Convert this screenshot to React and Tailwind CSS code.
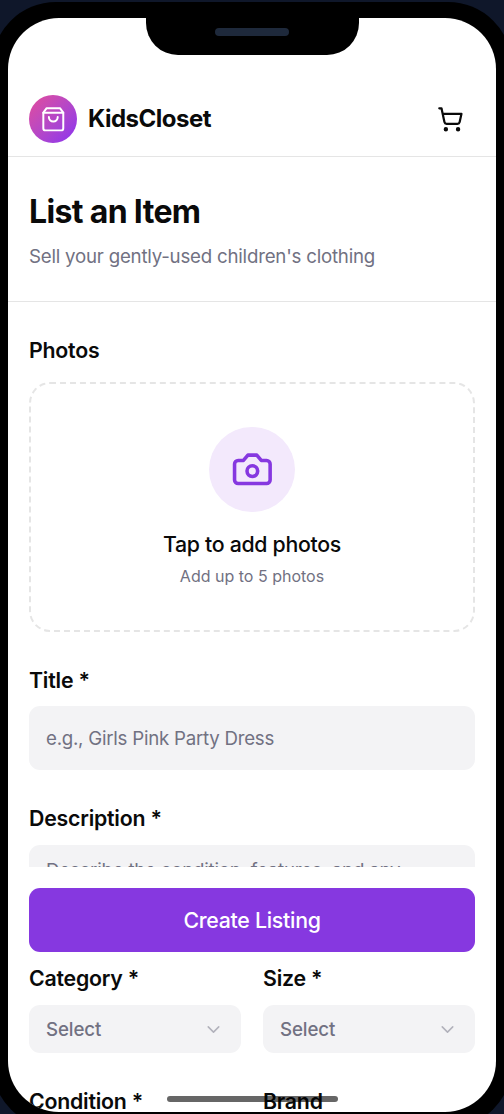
import React from 'react';
import { ChevronDown, ShoppingCart } from 'lucide-react';

const BagIcon = () => (
  <svg
    viewBox="0 0 24 24"
    fill="none"
    stroke="currentColor"
    strokeWidth="1.8"
    strokeLinecap="round"
    strokeLinejoin="round"
    className="w-[26.6px] h-[26.6px] text-white"
  >
    <path d="M6 2 3 6v14a2 2 0 0 0 2 2h14a2 2 0 0 0 2-2V6l-3-4Z" />
    <path d="M3 6h18" />
    <path d="M16 10a4 4 0 0 1-8 0" />
  </svg>
);

const CameraIcon = () => (
  <svg
    viewBox="0 0 24 24"
    fill="none"
    stroke="currentColor"
    strokeWidth="2"
    strokeLinecap="round"
    strokeLinejoin="round"
    className="w-[42.7px] h-[42.7px] text-[#8638e0]"
  >
    <path d="M14.5 4h-5L7 7H4a2 2 0 0 0-2 2v9a2 2 0 0 0 2 2h16a2 2 0 0 0 2-2V9a2 2 0 0 0-2-2h-3l-2.5-3z" />
    <circle cx="12" cy="13" r="3" />
  </svg>
);

const Label = ({ children }) => (
  <label className="block h-8 leading-8 text-[21.3px] font-semibold tracking-[-0.22px] whitespace-nowrap">
    {children}
  </label>
);

const SelectField = ({ label }) => (
  <div>
    <Label>{label}</Label>
    <button className="mt-[11px] w-full h-12 pl-[17px] pr-4 flex items-center justify-between rounded-[11px] bg-[#f3f3f5] text-[18.7px] font-medium tracking-[-0.1px] text-[#717182]">
      <span className="pt-0.5">Select</span>
      <ChevronDown className="w-[21px] h-[21px] mr-px opacity-50" strokeWidth={1.7} />
    </button>
  </div>
);

const App = () => {
  return (
    <div className="relative w-[504px] h-[1114px] overflow-hidden bg-[#0f172a] font-['Inter','Liberation_Sans',sans-serif] text-[#0a0a0a]">
      <div className="w-[520px] h-[1126px] -ml-2 mt-0.5 p-4 rounded-[64px] bg-black">
        <div className="relative w-[488px] h-[1094px] overflow-hidden rounded-[51px] bg-white">
          {/* Notch */}
          <div className="absolute top-0 left-[137.5px] w-[213px] h-[37px] flex justify-center pt-[10px] rounded-b-[32px] bg-black">
            <div className="w-[74px] h-2 rounded-full bg-[#1e293b]" />
          </div>

          {/* Header */}
          <header className="h-[139px] px-[21px] pb-[13px] flex items-end justify-between border-b border-[#e5e5e5]">
            <div className="flex items-center gap-[11px]">
              <div className="w-12 h-12 rounded-full flex items-center justify-center bg-linear-to-br from-[#e4499a] to-[#8b2df0]">
                <BagIcon />
              </div>
              <h1 className="text-[24px] font-bold tracking-[-0.5px]">KidsCloset</h1>
            </div>
            <button className="w-12 h-12 mr-px flex items-center justify-center">
              <ShoppingCart className="w-[26.6px] h-[26.6px]" />
            </button>
          </header>

          <section className="h-[145px] px-[21px] pt-[33px] border-b border-[#e5e5e5]">
            <h2 className="text-[32px] leading-[43px] font-bold tracking-[-0.65px]">List an Item</h2>
            <p className="mt-2 text-[18.7px] leading-8 tracking-[-0.22px] text-[#717182]">
              Sell your gently-used children's clothing
            </p>
          </section>

          <main className="px-[21px] pt-8">
            <Label>Photos</Label>
            <div className="mt-4 h-[250px] flex flex-col items-center pt-[43px] rounded-[21px] border-2 border-dashed border-[#e5e5e5]">
              <div className="w-[86px] h-[85px] rounded-full flex items-center justify-center bg-[#f3e9fc]">
                <CameraIcon />
              </div>
              <p className="mt-4 text-[21.3px] leading-8 font-medium tracking-[-0.3px]">
                Tap to add photos
              </p>
              <p className="mt-[5px] text-[16px] leading-[22px] text-[#717182]">Add up to 5 photos</p>
            </div>

            <div className="mt-8">
              <Label>Title *</Label>
              <input
                placeholder="e.g., Girls Pink Party Dress"
                className="mt-[10px] block w-full h-16 px-[17px] rounded-[11px] bg-[#f3f3f5] text-[18.7px] tracking-[-0.25px] placeholder:text-[#717182]"
              />
            </div>

            <div className="mt-8">
              <Label>Description *</Label>
              <textarea
                placeholder="Describe the condition, features, and any details..."
                className="mt-[11px] block w-full h-24 px-[17px] py-3 resize-none rounded-[11px] bg-[#f3f3f5] text-[18.7px] leading-7 tracking-[-0.22px] placeholder:text-[#717182]"
              />
            </div>

            <div className="mt-[21px] grid grid-cols-2 gap-x-[22px] gap-y-8">
              <SelectField label="Category *" />
              <SelectField label="Size *" />
              <SelectField label="Condition *" />
              <SelectField label="Brand" />
            </div>
          </main>

          {/* Sticky action */}
          <div className="absolute top-[849px] inset-x-0 px-[21px] pt-[21px] pb-4 bg-white">
            <button className="w-full h-16 pt-0.5 rounded-[11px] bg-[#8638e0] text-[21.3px] font-medium tracking-[-0.27px] text-white">
              Create Listing
            </button>
          </div>

          {/* Home indicator */}
          <div className="absolute top-[1078px] left-[159px] w-[171px] h-1.5 rounded-full bg-black/60" />
        </div>
      </div>
    </div>
  );
};

export default App;
